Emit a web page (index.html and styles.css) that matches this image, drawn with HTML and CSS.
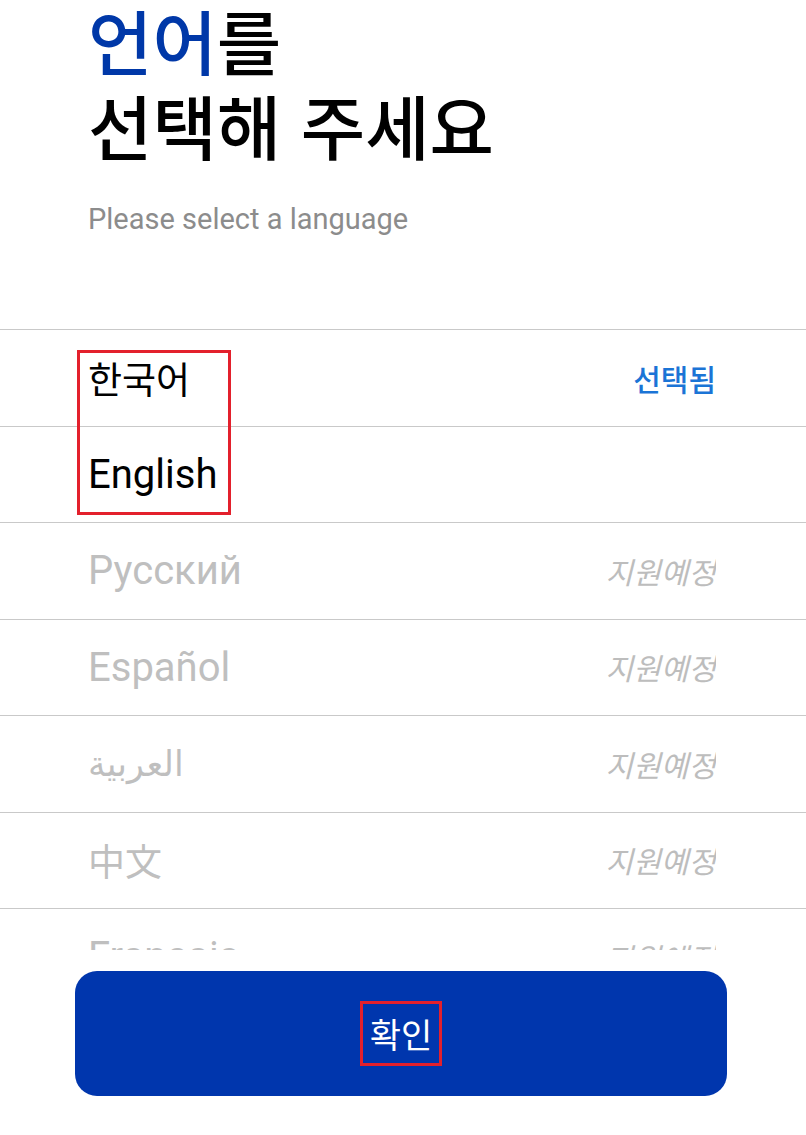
FILE: index.html
```html
<!DOCTYPE html>
<html lang="ko">
<head>
<meta charset="utf-8">
<link rel="stylesheet" href="styles.css">
</head>
<body>
<div class="page">
  <header class="header">
    <h1 class="title"><span class="line"><span class="accent">언어</span>를</span><span class="line">선택해 주세요</span></h1>
    <p class="subtitle">Please select a language</p>
  </header>
  <div class="list">
    <div class="row"><span class="name ko">한국어</span><span class="status selected">선택됨</span></div>
    <div class="row"><span class="name">English</span></div>
    <div class="row disabled"><span class="name">Русский</span><span class="status">지원예정</span></div>
    <div class="row disabled"><span class="name">Español</span><span class="status">지원예정</span></div>
    <div class="row disabled"><span class="name ar">العربية</span><span class="status">지원예정</span></div>
    <div class="row disabled"><span class="name cjk">中文</span><span class="status">지원예정</span></div>
    <div class="row disabled"><span class="name">Français</span><span class="status">지원예정</span></div>
  </div>
  <div class="footer">
    <button class="confirm"><span class="confirm-label">확인</span></button>
  </div>
  <div class="mark mark-langs"></div>
</div>
</body>
</html>
```
FILE: styles.css
```css
html, body {
  margin: 0;
  padding: 0;
  background: #ffffff;
}
.page {
  position: relative;
  width: 806px;
  height: 1135px;
  overflow: hidden;
  font-family: Roboto, "Noto Sans CJK KR", sans-serif;
}
.header {
  padding: 0 0 0 88px;
  height: 329px;
  box-sizing: border-box;
}
.title {
  margin: 0;
  padding-top: 0;
  font-family: "Noto Sans CJK KR", sans-serif;
  font-weight: 500;
  font-size: 70px;
  line-height: 85px;
  color: #000;
  display: flex;
  flex-direction: column;
  position: relative;
  top: -3px;
}
.line {
  display: block;
  height: 85px;
}
.accent {
  color: #0038a8;
}
.subtitle {
  margin: 32px 0 0 0;
  font-family: Roboto, sans-serif;
  font-size: 29px;
  line-height: 34px;
  color: #8c8c8c;
}
.list {
  border-top: 1px solid #c9c9c9;
  height: 620px;
  overflow: hidden;
}
.row {
  height: 96.5px;
  box-sizing: border-box;
  border-bottom: 1px solid #c9c9c9;
  display: flex;
  align-items: center;
  justify-content: space-between;
  padding: 0 90px 0 88px;
}
.name {
  font-family: Roboto, sans-serif;
  font-size: 40px;
  color: #000;
}
.name.ko {
  font-family: "Noto Sans CJK KR", sans-serif;
  font-size: 37px;
}
.name.ar {
  font-family: "DejaVu Sans", "Noto Sans", sans-serif;
  font-size: 35px;
}
.name.cjk {
  font-family: "Noto Sans CJK SC", sans-serif;
  font-size: 37px;
}
.disabled .name {
  color: #bfbfbf;
}
.status {
  font-family: "Noto Sans CJK KR", sans-serif;
  font-size: 30px;
  font-style: italic;
  color: #bdbdbd;
  overflow: hidden;
}
.status.selected {
  font-style: normal;
  font-weight: 500;
  color: #1b74d6;
}
.footer {
  padding: 21px 79px 0 75px;
}
.confirm {
  width: 100%;
  height: 125px;
  border: none;
  border-radius: 22px;
  background: #0036ad;
  color: #fff;
  font-family: "Noto Sans CJK KR", sans-serif;
  font-size: 34px;
  display: flex;
  align-items: center;
  justify-content: center;
  padding: 0;
}
.confirm-label {
  display: inline-block;
  padding: 5px 7px 4px;
  line-height: 50px;
  border: 3px solid #e3202c;
}
.mark {
  position: absolute;
  border: 3px solid #e3202c;
  box-sizing: border-box;
}
.mark-langs {
  left: 77px;
  top: 350px;
  width: 154px;
  height: 165px;
}
```
